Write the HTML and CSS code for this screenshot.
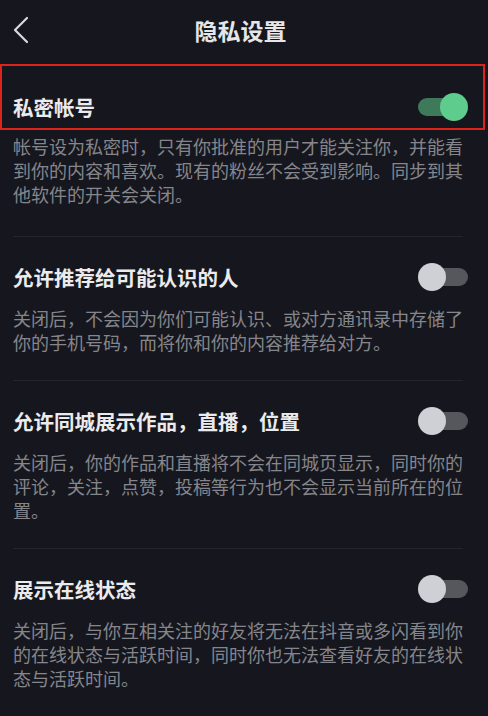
FILE: index.html
```html
<!DOCTYPE html>
<html lang="zh-CN">
<head>
    <meta charset="UTF-8">
    <meta name="viewport" content="width=device-width, initial-scale=1.0">
    <title>隐私设置</title>
    <link rel="stylesheet" href="styles.css">
</head>
<body>

    <header class="topbar">
        <a class="back" href="#">
            <svg width="16" height="28" viewBox="0 0 16 28">
                <polyline points="14,2 2,14 14,26" fill="none" stroke="#d9d9dd" stroke-width="2.2" stroke-linecap="round" stroke-linejoin="round"/>
            </svg>
        </a>
        <h1>隐私设置</h1>
        <span></span>
    </header>

    <section class="item first">
        <div class="row highlight">
            <span class="label">私密帐号</span>
            <span class="switch on"><i></i></span>
        </div>
        <p class="desc">帐号设为私密时，只有你批准的用户才能关注你，并能看到你的内容和喜欢。现有的粉丝不会受到影响。同步到其他软件的开关会关闭。</p>
    </section>
    <div class="divider"></div>

    <section class="item">
        <div class="row">
            <span class="label">允许推荐给可能认识的人</span>
            <span class="switch"><i></i></span>
        </div>
        <p class="desc">关闭后，不会因为你们可能认识、或对方通讯录中存储了你的手机号码，而将你和你的内容推荐给对方。</p>
    </section>
    <div class="divider"></div>

    <section class="item">
        <div class="row">
            <span class="label">允许同城展示作品，直播，位置</span>
            <span class="switch"><i></i></span>
        </div>
        <p class="desc">关闭后，你的作品和直播将不会在同城页显示，同时你的评论，关注，点赞，投稿等行为也不会显示当前所在的位置。</p>
    </section>
    <div class="divider"></div>

    <section class="item">
        <div class="row">
            <span class="label">展示在线状态</span>
            <span class="switch"><i></i></span>
        </div>
        <p class="desc">关闭后，与你互相关注的好友将无法在抖音或多闪看到你的在线状态与活跃时间，同时你也无法查看好友的在线状态与活跃时间。</p>
    </section>

</body>
</html>
```

FILE: styles.css
```css
body {
    margin: 0;
    background-color: #16171e;
    font-family: "Noto Sans CJK SC", "Noto Sans", sans-serif;
    color: #ebebed;
    overflow: hidden;
}
.topbar {
    height: 64px;
    display: grid;
    grid-template-columns: 1fr auto 1fr;
    align-items: center;
    padding-right: 7px;
}
.back {
    display: flex;
    padding-left: 13px;
    margin-top: -4px;
}
.topbar h1 {
    margin: 0;
    font-size: 23px;
    font-weight: 700;
    color: #e6e6e8;
    margin-top: -4px;
}
.item {
    padding: 26px 20px 26px 13px;
}
.item.first {
    padding-top: 0;
    padding-bottom: 30px;
}
.row {
    display: flex;
    align-items: center;
    justify-content: space-between;
    height: 28px;
}
.highlight {
    margin: 0 -17px 0 -13px;
    padding: 27px 15px 7px 11px;
    border: 2px solid #dc241b;
}
.label {
    font-size: 20.5px;
    font-weight: 700;
    color: #ebebed;
}
.desc {
    width: 452px;
    margin: 15px 0 0;
    font-size: 18px;
    line-height: 24px;
    color: #85868c;
}
.first .desc {
    margin-top: 4px;
}
.divider {
    height: 1px;
    margin: 0 25px 0 13px;
    background-color: #24252c;
}

/* toggle switch */
.switch {
    position: relative;
    width: 50px;
    height: 28px;
    flex-shrink: 0;
}
.switch::before {
    content: "";
    position: absolute;
    left: 4px;
    right: 0;
    top: 5px;
    height: 18px;
    border-radius: 9px;
    background-color: #56575d;
}
.switch i {
    position: absolute;
    left: 0;
    top: 0;
    width: 28px;
    height: 28px;
    border-radius: 50%;
    background-color: #cfd0d6;
}
.switch.on::before {
    left: 0;
    right: 4px;
    background-color: #3e7a59;
}
.switch.on i {
    left: auto;
    right: 0;
    background-color: #5ecc8c;
}
```
